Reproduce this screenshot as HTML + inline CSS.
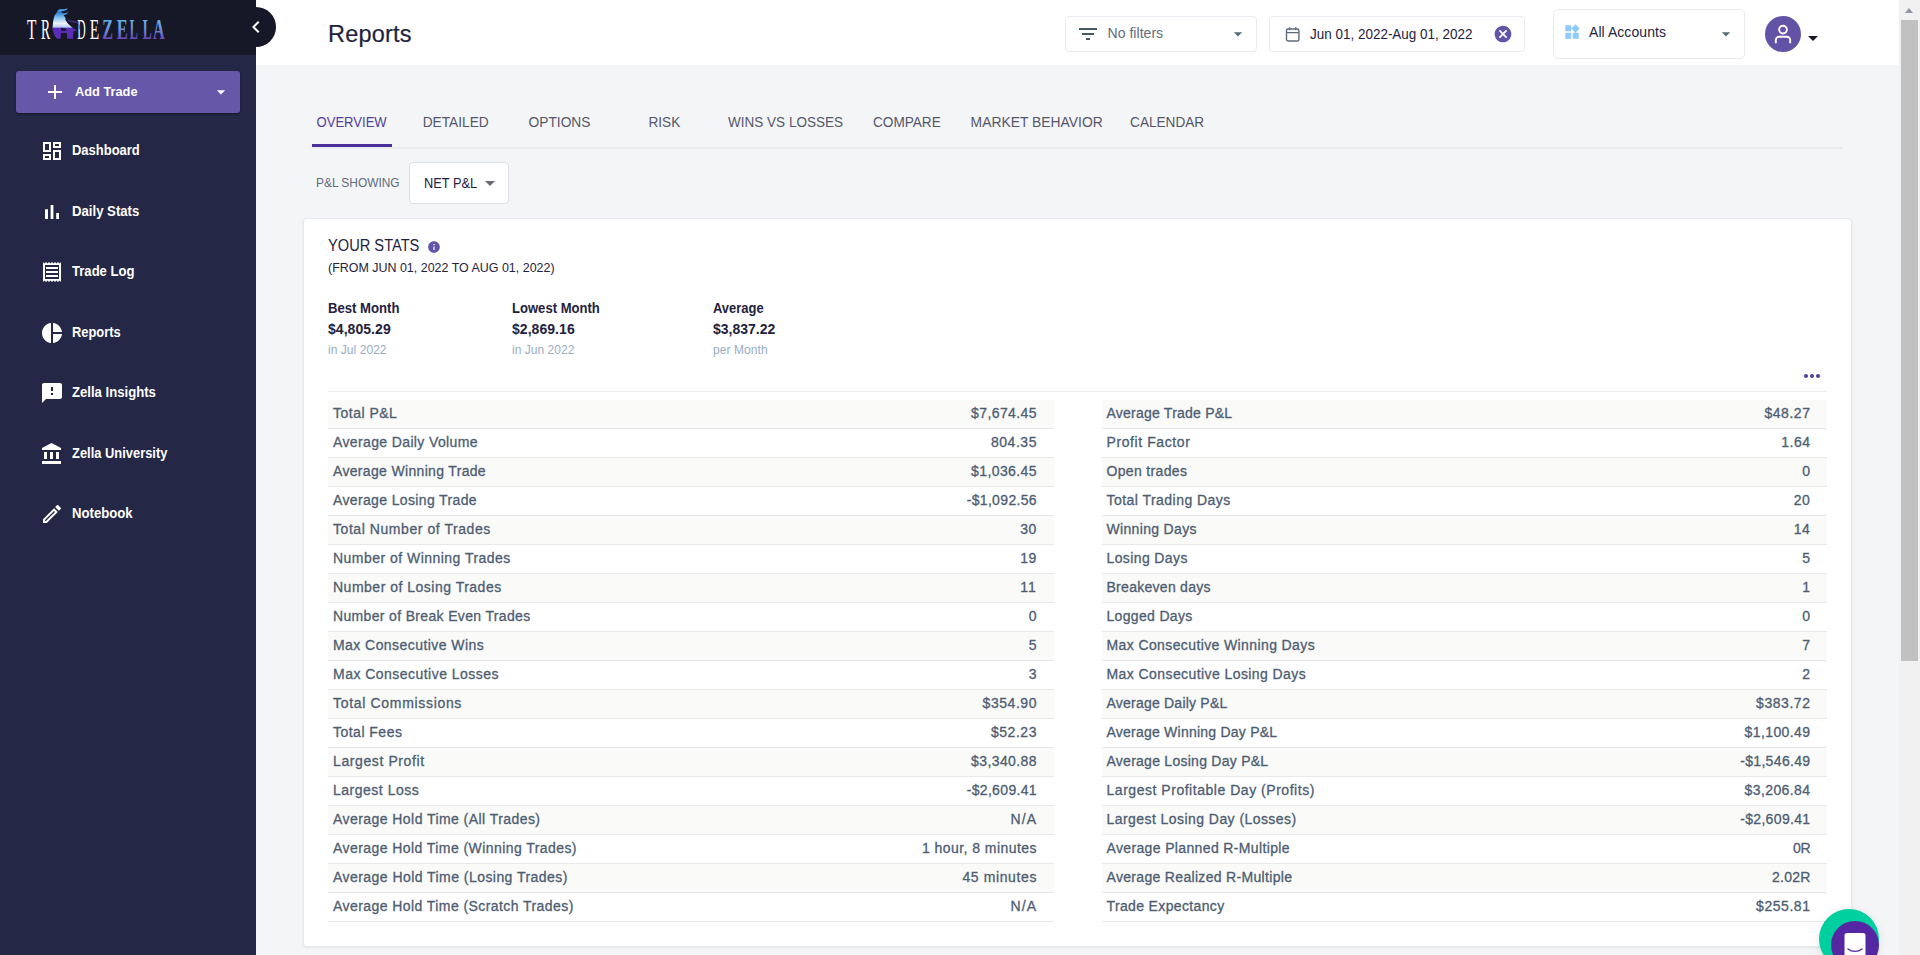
<!DOCTYPE html>
<html lang="en">
<head>
<meta charset="utf-8">
<title>Reports - TradeZella</title>
<style>
*{box-sizing:border-box;margin:0;padding:0}
html,body{width:1920px;height:955px;overflow:hidden;background:#f4f5f7;font-family:"Liberation Sans",sans-serif;color:#1f2240}
body{position:relative}
svg{display:block}
/* ---------- sidebar ---------- */
#sidebar{position:absolute;left:0;top:0;width:256px;height:955px;background:#242745;color:#fff}
#brand{position:absolute;left:0;top:0;width:256px;height:55px;background:#161828}
#logo{position:absolute;left:0;top:0}
#logo text{font-family:"Liberation Serif",serif;font-size:28.4px}
#collapse{position:absolute;left:236px;top:7px;width:40px;height:40px;z-index:5}
#collapse:before{content:"";position:absolute;left:0;top:0;width:40px;height:40px;border-radius:50%;background:#161828;clip-path:inset(0 0 0 20px)}
#collapse svg{position:absolute;left:8px;top:8px}
#addtrade{position:absolute;left:16px;top:71px;width:224px;height:42px;border-radius:3px;background:#6657a8;color:#fff;border:0;box-shadow:0 1px 2px rgba(0,0,0,.4);font-family:inherit}
#addtrade .plus{position:absolute;left:27px;top:9px}
#addtrade .lbl{position:absolute;left:59px;top:13px;font-size:13px;font-weight:700;line-height:16px;white-space:nowrap}
#addtrade .car{position:absolute;left:195px;top:11px}
#nav{position:absolute;left:0;top:120px;width:256px;list-style:none}
#nav li{position:absolute;left:0;width:256px;height:48px}
#nav li svg{position:absolute;left:40px;top:13px}
#nav li span{position:absolute;left:72px;top:15px;font-size:14px;font-weight:700;line-height:18px;white-space:nowrap}
/* ---------- top bar ---------- */
#topbar{position:absolute;left:256px;top:0;width:1643px;height:65px;background:#fff}
#topbar h1{position:absolute;left:72px;top:19px;font-size:23.5px;font-weight:400;line-height:30px;color:#1f2240;-webkit-text-stroke:.2px #1f2240;white-space:nowrap}
.box{position:absolute;background:#fff;border:1px solid #e8ebef;border-radius:4px}
.box .t{position:absolute;white-space:nowrap;font-size:14px;line-height:18px}
.box svg{position:absolute}
#avatar{position:absolute;left:1509px;top:16px;width:36px;height:36px;border-radius:50%;background:#6353a6}
#ucaret{position:absolute;left:1552px;top:36px;width:0;height:0;border-left:5px solid transparent;border-right:5px solid transparent;border-top:5px solid #161828}
#f1 svg:nth-of-type(1){left:10px;top:5px}
#f1 svg:nth-of-type(2){left:162px;top:7px}
#f2 #cal{left:15px;top:9px}
#f2 svg:nth-of-type(2){left:223px;top:7px}
#f3 svg:nth-of-type(1){left:8.6px;top:13px}
#f3 svg:nth-of-type(2){left:162px;top:14px}
#netpl svg{left:68px;top:8px}
/* ---------- scrollbar ---------- */
#sb{position:absolute;left:1899px;top:0;width:21px;height:955px;background:#f1f1f1}
#sb .thumb{position:absolute;left:2px;top:20px;width:17px;height:641px;background:#c1c1c1}
#sb .up{position:absolute;left:6px;top:8px;width:0;height:0;border-left:4.5px solid transparent;border-right:4.5px solid transparent;border-bottom:5px solid #8f97a6}
/* ---------- main ---------- */
#main{position:absolute;left:256px;top:65px;width:1643px;height:890px}
#tabs{position:absolute;left:55px;top:36px;width:1532px;height:48px;border-bottom:2px solid #e9ebee;list-style:none}
#tabs li{position:absolute;top:0;height:48px;font-size:14px;line-height:18px;padding-top:12px;text-align:center;color:#55556a;white-space:nowrap}
#tabs li.on{color:#553c9a;left:1px!important}
#tabs li.on:after{content:"";position:absolute;left:0;right:0;top:43px;height:3px;background:#4c2f9b}
#pl{position:absolute;left:60px;top:111px;font-size:12px;line-height:14px;color:#5c6b7d;white-space:nowrap}
#card{position:absolute;left:47px;top:153px;width:1549px;height:729px;background:#fff;border:1px solid #e6e8ec;border-radius:4px;box-shadow:0 1px 3px rgba(0,0,0,.07)}
#cardin{position:absolute;left:1px;top:1px;width:1px;height:1px}
#card h2{position:absolute;left:23px;top:16px;font-size:16px;font-weight:400;line-height:20px;color:#1f2240;white-space:nowrap}
#card h2 svg{position:absolute;left:99px;top:4px}
#card .rng{position:absolute;left:23px;top:40px;font-size:13px;line-height:16px;color:#1f2240;white-space:nowrap}
.kpi{position:absolute;top:78px;white-space:nowrap}
.kpi b{display:block;font-size:14px;line-height:21px;font-weight:700;color:#1f2240}
.kpi i{display:block;font-style:normal;font-size:12px;line-height:20px;color:#98adc4}
#dots{position:absolute;left:1495px;top:144px}
#hr{position:absolute;left:23px;top:171px;width:1499px;height:1px;background:#e9ebee}
table.st{position:absolute;top:180px;width:725.5px;border-collapse:separate;border-spacing:0;font-size:14px;color:#4d5d72;-webkit-text-stroke:.3px #4d5d72}
table.st td{border-bottom:1px solid #e8e9eb;height:29px;padding:0 16.5px 2px 5px;line-height:20px;white-space:nowrap;vertical-align:middle}
table.st tr:nth-child(odd) td{background:#fafaf9}
table.st td.v{text-align:right}
/* ---------- chat ---------- */
#chat{position:absolute;left:1819px;top:909px;width:60px;height:60px;border-radius:50%;background:#00cf9f;box-shadow:0 2px 10px rgba(0,0,0,.10)}
#chat i{position:absolute;left:12px;top:12px;width:48px;height:48px;border-radius:50%;background:#5627a3}
</style>
</head>
<body>
<aside id="sidebar">
  <div id="brand">
    <svg id="logo" width="256" height="55" viewBox="0 0 256 55">
      <defs>
        <linearGradient id="gz" gradientUnits="userSpaceOnUse" x1="0" y1="20" x2="0" y2="39"><stop offset="0" stop-color="#5eb0ea"/><stop offset=".4" stop-color="#6c9be2"/><stop offset="1" stop-color="#6a48be"/></linearGradient>
        <linearGradient id="gb" gradientUnits="userSpaceOnUse" x1="0" y1="8" x2="0" y2="39"><stop offset="0" stop-color="#63b4ea"/><stop offset=".15" stop-color="#2f7fd0"/><stop offset=".33" stop-color="#8fc8f2"/><stop offset=".5" stop-color="#eef3fb"/><stop offset=".62" stop-color="#b4cdf0"/><stop offset=".645" stop-color="#5a2db6"/><stop offset="1" stop-color="#5a2db6"/></linearGradient>
      </defs>
      <g fill="#fff"><text y="38.75" transform="translate(27.10 0) scale(0.54 1)">T</text><text y="38.75" transform="translate(41.00 0) scale(0.48 1)">R</text><text y="38.75" transform="translate(77.25 0) scale(0.41 1)">D</text><text y="38.75" transform="translate(89.75 0) scale(0.545 1)">E</text></g>
      <g fill="url(#gz)" font-weight="700"><text y="38.75" transform="translate(102.25 0) scale(0.565 1)">Z</text><text y="38.75" transform="translate(116.75 0) scale(0.58 1)">E</text><text y="38.75" transform="translate(129.75 0) scale(0.42 1)">L</text><text y="38.75" transform="translate(142.75 0) scale(0.47 1)">L</text><text y="38.75" transform="translate(153.05 0) scale(0.57 1)">A</text></g>
      <path fill="url(#gb)" fill-rule="evenodd" d="M58.1 9.9L60.5 9C63 9.4 65.6 9.2 67.8 8.2 66.6 10.4 64.2 11.2 61.6 11.3L61.2 12.6C63.6 13.7 66.6 13 68.8 11.5 67.6 13.9 65.6 15 63.6 15.2L65.7 18.2 65.2 19.6 67.8 23.4 72.8 28 77 30.6 73.3 31.6 73.1 38.8H67.1L67 33H60.8L60.5 38.8H57L54.6 35.6 52.4 29.2 53.1 21.6 54.4 15.7 56.9 12.3ZM61.2 27.7L65.4 28.6 66.6 30.8H61Z"/>
      <path fill="none" stroke="#6a3fd0" stroke-width=".8" d="M67.8 20.3C71 21.8 74.2 21.4 77 22.4 79 23.6 79.9 26 79.5 29"/>
    </svg>
  </div>
  <button id="addtrade"><span class="plus"><svg width="24" height="24" viewBox="0 0 24 24" ><path fill="#fff" d="M19 13h-6v6h-2v-6H5v-2h6V5h2v6h6v2z"/></svg></span><span class="lbl"><span style="display:inline-block;transform:scaleX(0.983);transform-origin:0 0">Add Trade</span></span><span class="car"><svg width="20" height="20" viewBox="0 0 24 24" ><path fill="#fff" d="M7 10l5 5 5-5z"/></svg></span></button>
  <ul id="nav">
    <li style="top:6px"><svg width="24" height="24" viewBox="0 0 24 24" ><path fill="#fff" d="M19 5v2h-4V5h4M9 5v6H5V5h4m10 8v6h-4v-6h4M9 17v2H5v-2h4M21 3h-8v6h8V3zM11 3H3v10h8V3zm10 8h-8v10h8V11zm-10 4H3v6h8v-6z"/></svg><span style="display:inline-block;transform:scaleX(0.927);transform-origin:0 0">Dashboard</span></li>
    <li style="top:67px"><svg width="24" height="24" viewBox="0 0 24 24" ><path fill="#fff" d="M5 9.2h3V19H5zM10.6 5h2.8v14h-2.8zm5.6 8H19v6h-2.8z"/></svg><span style="display:inline-block;transform:scaleX(0.940);transform-origin:0 0">Daily Stats</span></li>
    <li style="top:127px"><svg width="24" height="24" viewBox="0 0 24 24" ><path fill="#fff" d="M19.5 3.5L18 2l-1.5 1.5L15 2l-1.5 1.5L12 2l-1.5 1.5L9 2 7.5 3.5 6 2 4.5 3.5 3 2v20l1.5-1.5L6 22l1.5-1.5L9 22l1.5-1.5L12 22l1.5-1.5L15 22l1.5-1.5L18 22l1.5-1.5L21 22V2l-1.5 1.5zM19 19.09H5V4.91h14v14.18zM6 15h12v2H6zm0-4h12v2H6zm0-4h12v2H6z"/></svg><span style="display:inline-block;transform:scaleX(0.934);transform-origin:0 0">Trade Log</span></li>
    <li style="top:188px"><svg width="24" height="24" viewBox="0 0 24 24" ><path fill="#fff" d="M11 2v20c-5.07-.5-9-4.79-9-10s3.93-9.5 9-10zm2.03 0v8.99H22c-.47-4.74-4.24-8.52-8.97-8.99zm0 11.01V22c4.74-.47 8.5-4.25 8.97-8.99h-8.97z"/></svg><span style="display:inline-block;transform:scaleX(0.921);transform-origin:0 0">Reports</span></li>
    <li style="top:248px"><svg width="24" height="24" viewBox="0 0 24 24" ><path fill="#fff" d="M20 2H4c-1.1 0-1.99.9-1.99 2L2 22l4-4h14c1.1 0 2-.9 2-2V4c0-1.1-.9-2-2-2zm-7 12h-2v-2h2v2zm0-4h-2V6h2v4z"/></svg><span style="display:inline-block;transform:scaleX(0.938);transform-origin:0 0">Zella Insights</span></li>
    <li style="top:309px"><svg width="24" height="24" viewBox="0 0 24 24" ><path fill="#fff" d="M4 10v7h3v-7H4zm6 0v7h3v-7h-3zM2 22h19v-3H2v3zm14-12v7h3v-7h-3zm-4.5-9L2 6v2h19V6l-9.5-5z"/></svg><span style="display:inline-block;transform:scaleX(0.922);transform-origin:0 0">Zella University</span></li>
    <li style="top:369px"><svg width="24" height="24" viewBox="0 0 24 24" ><path fill="#fff" d="M14.06 9.02l.92.92L5.92 19H5v-.92l9.06-9.06M17.66 3c-.25 0-.51.1-.7.29l-1.83 1.83 3.75 3.75 1.83-1.83c.39-.39.39-1.02 0-1.41l-2.34-2.34c-.2-.2-.45-.29-.71-.29zm-3.6 3.19L3 17.25V21h3.75L17.81 9.94l-3.75-3.75z"/></svg><span style="display:inline-block;transform:scaleX(0.939);transform-origin:0 0">Notebook</span></li>
  </ul>
</aside>
<div id="collapse"><svg width="24" height="24" viewBox="0 0 24 24" ><path fill="#fff" d="M15.41 7.41L14 6l-6 6 6 6 1.41-1.41L10.83 12z"/></svg></div>
<header id="topbar">
  <h1><span style="letter-spacing:0.19px">Reports</span></h1>
  <div class="box" id="f1" style="left:809px;top:16px;width:192px;height:36px"><svg width="24" height="24" viewBox="0 0 24 24" ><path fill="#455a64" d="M10 18h4v-2h-4v2zM3 6v2h18V6H3zm3 7h12v-2H6v2z"/></svg><span class="t" style="left:41.5px;top:7px;color:#5f6d7c"><span style="letter-spacing:0.04px">No filters</span></span><svg width="20" height="20" viewBox="0 0 24 24" ><path fill="#546e7a" d="M7 10l5 5 5-5z"/></svg></div>
  <div class="box" id="f2" style="left:1013px;top:16px;width:256px;height:36px"><svg id="cal" width="18" height="18" viewBox="0 0 18 18"><g fill="none" stroke="#5c6b7a" stroke-width="1.4"><rect x="1.5" y="3" width="12.4" height="12" rx="1.6"/><path d="M1.5 6.6h12.4M4.6 1.2v3M10.8 1.2v3"/></g></svg><span class="t" style="left:40px;top:8px;color:#1f2240"><span style="display:inline-block;transform:scaleX(0.962);transform-origin:0 0">Jun 01, 2022-Aug 01, 2022</span></span><svg width="20" height="20" viewBox="0 0 24 24" ><path fill="#6353a6" d="M12 2C6.47 2 2 6.47 2 12s4.47 10 10 10 10-4.47 10-10S17.53 2 12 2zm5 13.59L15.59 17 12 13.41 8.41 17 7 15.59 10.59 12 7 8.41 8.41 7 12 10.59 15.59 7 17 8.41 13.41 12 17 15.59z"/></svg></div>
  <div class="box" id="f3" style="left:1297px;top:9px;width:192px;height:50px;border-radius:5px"><svg width="18" height="18" viewBox="0 0 24 24" ><path fill="#90caf9" d="M13 13v8h8v-8h-8zM3 21h8v-8H3v8zM3 3v8h8V3H3zm13.66-1.31L11 7.34 16.66 13l5.66-5.66-5.66-5.65z"/></svg><span class="t" style="left:35px;top:13px;color:#1f2240"><span style="letter-spacing:0.06px">All Accounts</span></span><svg width="20" height="20" viewBox="0 0 24 24" ><path fill="#546e7a" d="M7 10l5 5 5-5z"/></svg></div>
  <div id="avatar"><svg width="36" height="36" viewBox="0 0 36 36"><g fill="none" stroke="#fff" stroke-width="1.9"><circle cx="18" cy="13.6" r="3.9"/><path d="M10.8 27.2v-3.1a3.4 3.4 0 0 1 3.4-3.4h7.6a3.4 3.4 0 0 1 3.4 3.4v3.1"/></g></svg></div>
  <span id="ucaret"></span>
</header>
<main id="main">
  <ul id="tabs">
    <li class="on" style="left:0.9px;width:80px"><span style="display:inline-block;transform:scaleX(0.932);transform-origin:50% 0">OVERVIEW</span></li>
    <li style="left:64.9px;width:160px"><span style="display:inline-block;transform:scaleX(0.981);transform-origin:50% 0">DETAILED</span></li>
    <li style="left:168.8px;width:160px"><span style="display:inline-block;transform:scaleX(0.983);transform-origin:50% 0">OPTIONS</span></li>
    <li style="left:273.0px;width:160px"><span style="display:inline-block;transform:scaleX(0.970);transform-origin:50% 0">RISK</span></li>
    <li style="left:394.2px;width:160px"><span style="display:inline-block;transform:scaleX(0.965);transform-origin:50% 0">WINS VS LOSSES</span></li>
    <li style="left:515.8px;width:160px"><span style="display:inline-block;transform:scaleX(0.971);transform-origin:50% 0">COMPARE</span></li>
    <li style="left:645.8px;width:160px"><span style="display:inline-block;transform:scaleX(0.991);transform-origin:50% 0">MARKET BEHAVIOR</span></li>
    <li style="left:775.8px;width:160px"><span style="display:inline-block;transform:scaleX(0.972);transform-origin:50% 0">CALENDAR</span></li>
  </ul>
  <div id="pl"><span style="display:inline-block;transform:scaleX(0.992);transform-origin:0 0">P&amp;L SHOWING</span></div>
  <div class="box" id="netpl" style="left:153px;top:97px;width:100px;height:42px;border-color:#dcdfe4"><span class="t" style="left:13.5px;top:11px;color:#1f2240"><span style="display:inline-block;transform:scaleX(0.916);transform-origin:0 0">NET P&amp;L</span></span><svg width="24" height="24" viewBox="0 0 24 24" ><path fill="#6b6b76" d="M7 10l5 5 5-5z"/></svg></div>
  <section id="card"><div id="cardin">
    <h2><span style="display:inline-block;transform:scaleX(0.915);transform-origin:0 0">YOUR STATS</span><svg width="14" height="14" viewBox="0 0 24 24" ><path fill="#6353a6" d="M12 2C6.48 2 2 6.48 2 12s4.48 10 10 10 10-4.48 10-10S17.52 2 12 2zm1 15h-2v-6h2v6zm0-8h-2V7h2v2z"/></svg></h2>
    <div class="rng"><span style="display:inline-block;transform:scaleX(0.958);transform-origin:0 0">(FROM JUN 01, 2022 TO AUG 01, 2022)</span></div>
    <div class="kpi" style="left:23px"><b style="transform:scaleX(0.938);transform-origin:0 0">Best Month</b><b style="letter-spacing:0.05px">$4,805.29</b><i style="letter-spacing:0.05px">in Jul 2022</i></div>
    <div class="kpi" style="left:207px"><b style="transform:scaleX(0.933);transform-origin:0 0">Lowest Month</b><b style="letter-spacing:0.05px">$2,869.16</b><i style="letter-spacing:0.03px">in Jun 2022</i></div>
    <div class="kpi" style="left:408px"><b style="transform:scaleX(0.924);transform-origin:0 0">Average</b><b style="letter-spacing:-0.01px">$3,837.22</b><i style="letter-spacing:0.07px">per Month</i></div>
    <div id="dots"><svg width="24" height="24" viewBox="0 0 24 24" ><path fill="#4e3d9e" d="M6 10c-1.1 0-2 .9-2 2s.9 2 2 2 2-.9 2-2-.9-2-2-2zm12 0c-1.1 0-2 .9-2 2s.9 2 2 2 2-.9 2-2-.9-2-2-2zm-6 0c-1.1 0-2 .9-2 2s.9 2 2 2 2-.9 2-2-.9-2-2-2z"/></svg></div>
    <div id="hr"></div>
    <table class="st" style="left:23px">
      <tr><td style="letter-spacing:0.49px">Total P&amp;L</td><td class="v" style="letter-spacing:0.41px">$7,674.45</td></tr>
      <tr><td style="letter-spacing:0.37px">Average Daily Volume</td><td class="v" style="letter-spacing:0.54px">804.35</td></tr>
      <tr><td style="letter-spacing:0.33px">Average Winning Trade</td><td class="v" style="letter-spacing:0.41px">$1,036.45</td></tr>
      <tr><td style="letter-spacing:0.36px">Average Losing Trade</td><td class="v" style="letter-spacing:0.34px">-$1,092.56</td></tr>
      <tr><td style="letter-spacing:0.56px">Total Number of Trades</td><td class="v" style="letter-spacing:0.59px">30</td></tr>
      <tr><td style="letter-spacing:0.47px">Number of Winning Trades</td><td class="v" style="letter-spacing:0.59px">19</td></tr>
      <tr><td style="letter-spacing:0.5px">Number of Losing Trades</td><td class="v" style="letter-spacing:1.1px">11</td></tr>
      <tr><td style="letter-spacing:0.34px">Number of Break Even Trades</td><td class="v" style="letter-spacing:0.58px">0</td></tr>
      <tr><td style="letter-spacing:0.44px">Max Consecutive Wins</td><td class="v" style="letter-spacing:0.58px">5</td></tr>
      <tr><td style="letter-spacing:0.47px">Max Consecutive Losses</td><td class="v" style="letter-spacing:0.58px">3</td></tr>
      <tr><td style="letter-spacing:0.68px">Total Commissions</td><td class="v" style="letter-spacing:0.54px">$354.90</td></tr>
      <tr><td style="letter-spacing:0.48px">Total Fees</td><td class="v" style="letter-spacing:0.54px">$52.23</td></tr>
      <tr><td style="letter-spacing:0.6px">Largest Profit</td><td class="v" style="letter-spacing:0.41px">$3,340.88</td></tr>
      <tr><td style="letter-spacing:0.51px">Largest Loss</td><td class="v" style="letter-spacing:0.34px">-$2,609.41</td></tr>
      <tr><td style="letter-spacing:0.44px">Average Hold Time (All Trades)</td><td class="v" style="letter-spacing:1.02px">N/A</td></tr>
      <tr><td style="letter-spacing:0.43px">Average Hold Time (Winning Trades)</td><td class="v" style="letter-spacing:0.45px">1 hour, 8 minutes</td></tr>
      <tr><td style="letter-spacing:0.45px">Average Hold Time (Losing Trades)</td><td class="v" style="letter-spacing:0.61px">45 minutes</td></tr>
      <tr><td style="letter-spacing:0.43px">Average Hold Time (Scratch Trades)</td><td class="v" style="letter-spacing:1.02px">N/A</td></tr>
    </table>
    <table class="st" style="left:796.5px">
      <tr><td style="letter-spacing:0.23px">Average Trade P&amp;L</td><td class="v" style="letter-spacing:0.54px">$48.27</td></tr>
      <tr><td style="letter-spacing:0.59px">Profit Factor</td><td class="v" style="letter-spacing:0.51px">1.64</td></tr>
      <tr><td style="letter-spacing:0.34px">Open trades</td><td class="v" style="letter-spacing:0.58px">0</td></tr>
      <tr><td style="letter-spacing:0.46px">Total Trading Days</td><td class="v" style="letter-spacing:0.59px">20</td></tr>
      <tr><td style="letter-spacing:0.33px">Winning Days</td><td class="v" style="letter-spacing:0.59px">14</td></tr>
      <tr><td style="letter-spacing:0.39px">Losing Days</td><td class="v" style="letter-spacing:0.58px">5</td></tr>
      <tr><td style="letter-spacing:0.28px">Breakeven days</td><td class="v" style="letter-spacing:0.58px">1</td></tr>
      <tr><td style="letter-spacing:0.33px">Logged Days</td><td class="v" style="letter-spacing:0.58px">0</td></tr>
      <tr><td style="letter-spacing:0.39px">Max Consecutive Winning Days</td><td class="v" style="letter-spacing:0.58px">7</td></tr>
      <tr><td style="letter-spacing:0.42px">Max Consecutive Losing Days</td><td class="v" style="letter-spacing:0.58px">2</td></tr>
      <tr><td style="letter-spacing:0.22px">Average Daily P&amp;L</td><td class="v" style="letter-spacing:0.54px">$383.72</td></tr>
      <tr><td style="letter-spacing:0.23px">Average Winning Day P&amp;L</td><td class="v" style="letter-spacing:0.41px">$1,100.49</td></tr>
      <tr><td style="letter-spacing:0.26px">Average Losing Day P&amp;L</td><td class="v" style="letter-spacing:0.34px">-$1,546.49</td></tr>
      <tr><td style="letter-spacing:0.53px">Largest Profitable Day (Profits)</td><td class="v" style="letter-spacing:0.41px">$3,206.84</td></tr>
      <tr><td style="letter-spacing:0.44px">Largest Losing Day (Losses)</td><td class="v" style="letter-spacing:0.34px">-$2,609.41</td></tr>
      <tr><td style="letter-spacing:0.36px">Average Planned R-Multiple</td><td class="v" style="letter-spacing:-0.2px">0R</td></tr>
      <tr><td style="letter-spacing:0.32px">Average Realized R-Multiple</td><td class="v" style="letter-spacing:0.22px">2.02R</td></tr>
      <tr><td style="letter-spacing:0.36px">Trade Expectancy</td><td class="v" style="letter-spacing:0.54px">$255.81</td></tr>
    </table>
  </div></section>
</main>
<div id="chat"><i><svg width="48" height="48" viewBox="0 0 48 48"><rect x="13.5" y="12" width="21" height="24" rx="2.5" fill="#fff"/><path d="M17 28c4 3.2 10 3.2 14 0" fill="none" stroke="#5627a3" stroke-width="1.4" stroke-linecap="round"/></svg></i></div>
<div id="sb"><span class="up"></span><span class="thumb"></span></div>
</body>
</html>
